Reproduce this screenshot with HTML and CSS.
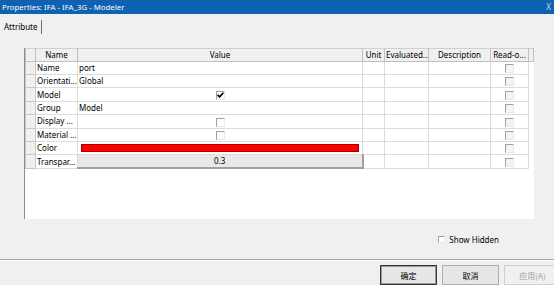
FILE: index.html
```html
<!DOCTYPE html>
<html lang="en">
<head>
  <meta charset="UTF-8">
  <title>Properties: IFA - IFA_3G - Modeler</title>
  <link rel="stylesheet" href="styles.css">
</head>
<body>

<div class="dialog">
  <div class="titlebar">
    <span class="title">Properties: IFA - IFA_3G - Modeler</span>
    <span class="close">X</span>
  </div>

  <div class="tabs">
    <div class="tab">Attribute</div>
  </div>

  <div class="grid-box">
    <table class="grid">
      <colgroup>
        <col class="c-hdr">
        <col class="c-name">
        <col class="c-value">
        <col class="c-unit">
        <col class="c-eval">
        <col class="c-desc">
        <col class="c-ro">
        <col class="c-stub">
      </colgroup>
      <thead>
        <tr>
          <th></th>
          <th>Name</th>
          <th>Value</th>
          <th>Unit</th>
          <th>Evaluated...</th>
          <th>Description</th>
          <th>Read-o...</th>
          <th class="stub"></th>
        </tr>
      </thead>
      <tbody>
        <tr>
          <td class="rh"></td><td>Name</td><td>port</td><td></td><td></td><td></td>
          <td class="center"><span class="chk ro"></span></td><td class="stub"></td>
        </tr>
        <tr>
          <td class="rh"></td><td>Orientati...</td><td>Global</td><td></td><td></td><td></td>
          <td class="center"><span class="chk ro"></span></td><td class="stub"></td>
        </tr>
        <tr>
          <td class="rh"></td><td>Model</td>
          <td class="center"><span class="chk"><svg width="7" height="6" viewBox="0 0 7 6"><polyline points="0.6,2.8 2.6,4.9 6.4,0.7" fill="none" stroke="#000" stroke-width="1.7"/></svg></span></td>
          <td></td><td></td><td></td>
          <td class="center"><span class="chk ro"></span></td><td class="stub"></td>
        </tr>
        <tr>
          <td class="rh"></td><td>Group</td><td>Model</td><td></td><td></td><td></td>
          <td class="center"><span class="chk ro"></span></td><td class="stub"></td>
        </tr>
        <tr>
          <td class="rh"></td><td>Display ...</td><td class="center"><span class="chk"></span></td><td></td><td></td><td></td>
          <td class="center"><span class="chk ro"></span></td><td class="stub"></td>
        </tr>
        <tr>
          <td class="rh"></td><td>Material ...</td><td class="center"><span class="chk"></span></td><td></td><td></td><td></td>
          <td class="center"><span class="chk ro"></span></td><td class="stub"></td>
        </tr>
        <tr>
          <td class="rh"></td><td>Color</td><td><div class="swatch"></div></td><td></td><td></td><td></td>
          <td class="center"><span class="chk ro"></span></td><td class="stub"></td>
        </tr>
        <tr>
          <td class="rh"></td><td>Transpar...</td><td class="btn-cell">0.3</td><td></td><td></td><td></td>
          <td class="center"><span class="chk ro"></span></td><td class="stub"></td>
        </tr>
      </tbody>
    </table>
  </div>

  <div class="options">
    <label class="show-hidden"><span class="chk"></span>Show Hidden</label>
  </div>

  <div class="footer">
    <button class="btn default">确定</button>
    <button class="btn">取消</button>
    <button class="btn disabled">应用(A)</button>
  </div>
</div>

</body>
</html>
```

FILE: styles.css
```css
body {
  margin: 0;
  background-color: #f0f0f0;
  font-family: "Noto Sans", "Noto Sans CJK SC", sans-serif;
  font-size: 8px;
  color: #000;
  overflow: hidden;
}

.dialog {
  width: 554px;
  height: 285px;
  display: flex;
  flex-direction: column;
  overflow: hidden;
}

.titlebar {
  height: 14px;
  background-color: #0f62b0;
  color: #fff;
  display: flex;
  justify-content: space-between;
  align-items: center;
  padding: 0 3px 0 2px;
  font-size: 7.8px;
}

.close {
  font-size: 8px;
  color: #c8d8ec;
}

.tabs {
  height: 20px;
  display: flex;
  align-items: flex-end;
  padding-left: 2px;
}

.tab {
  height: 14px;
  line-height: 13px;
  padding: 0 3px 0 2px;
  border-right: 1px solid #6e6e6e;
}

.grid-box {
  margin: 14px 0 0 24px;
  width: 509px;
  height: 174px;
  background-color: #fff;
  border-left: 1px solid #8c8c8c;
}

.grid {
  border-collapse: collapse;
  table-layout: fixed;
  width: 508px;
}

.c-hdr { width: 10px; }
.c-name { width: 42px; }
.c-value { width: 285px; }
.c-unit { width: 22px; }
.c-eval { width: 44px; }
.c-desc { width: 62px; }
.c-ro { width: 38px; }
.c-stub { width: 5px; }

.grid thead tr {
  height: 13px;
}

.grid tbody tr {
  height: 13.4px;
}

.grid th {
  font-weight: normal;
  background-color: #f0f0f0;
  border: 1px solid #c0c0c0;
  border-top-color: #d0d0d0;
  text-align: center;
  white-space: nowrap;
  overflow: hidden;
  padding: 0 1px;
  line-height: 10px;
}

.grid td {
  border: 1px solid #dcdcdc;
  padding: 0 1px;
  white-space: nowrap;
  overflow: hidden;
  line-height: 10px;
}

.grid td.rh {
  background-color: #f0f0f0;
  border-color: #c8c8c8;
}

.grid td.stub {
  border: none;
  background-color: #fff;
}

.grid th.stub {
  border-left: none;
}

.center {
  text-align: center;
}

.chk {
  display: inline-flex;
  justify-content: center;
  align-items: center;
  box-sizing: border-box;
  width: 9px;
  height: 9px;
  background-color: #fff;
  border-top: 1px solid #a0a0a0;
  border-left: 1px solid #a0a0a0;
  border-right: 1px solid #e8e8e8;
  border-bottom: 1px solid #e8e8e8;
  vertical-align: middle;
}

.chk.ro {
  background-color: #f4f4f4;
}

.swatch {
  height: 8px;
  margin: 0 2px;
  background-color: #ff0000;
  border: 1px solid #a00000;
  box-sizing: border-box;
}

.grid td.btn-cell {
  background-color: #e8e8e8;
  text-align: center;
  border-right: 2px solid #a0a0a0;
  border-bottom: 2px solid #a0a0a0;
}

.options {
  height: 40px;
  display: flex;
  justify-content: flex-end;
  align-items: center;
  padding-right: 55px;
}

.show-hidden {
  display: flex;
  align-items: center;
  gap: 4px;
  font-size: 8px;
}

.show-hidden .chk {
  width: 7px;
  height: 7px;
}

.footer {
  border-top: 1px solid #a8a8a8;
  box-shadow: inset 0 1px 0 #fff;
  display: flex;
  padding: 5px 0 0 380px;
  gap: 5px;
}

.btn {
  width: 57px;
  height: 20px;
  flex-shrink: 0;
  font-family: "Noto Sans CJK SC", sans-serif;
  font-size: 8px;
  background-color: #e6e6e6;
  border: 1px solid #adadad;
  padding: 0;
}

.btn.default {
  border: 1px solid #333;
  box-shadow: inset 0 0 0 1px #9a9a9a;
}

.btn.disabled {
  color: #a0a0a0;
  background-color: #f0f0f0;
  border-color: #d0d0d0;
}
```
